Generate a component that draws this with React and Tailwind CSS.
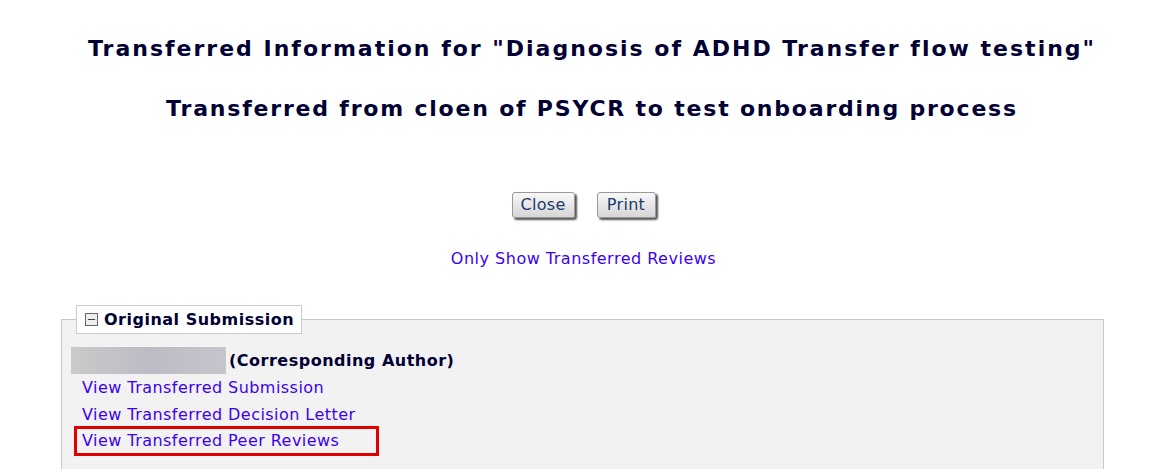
import { Minus } from 'lucide-react'

const LinkRow = ({ text }) => (
  <div className="pl-[11px] h-[27px] leading-[27px]">
    <a href="#" className="text-[#3c00f0] text-[16px] tracking-[0.45px]">{text}</a>
  </div>
)

const App = () => {
  return (
    <div className="w-[1153px] h-[469px] bg-white overflow-hidden text-[#000033]" style={{ fontFamily: '"DejaVu Sans", Verdana, sans-serif' }}>
      {/* Заголовки */}
      <div className="pl-[31px] pt-[31px] text-center">
        <h1 className="text-[22px] font-bold leading-[36px] tracking-[2px]">
          Transferred Information for "Diagnosis of ADHD Transfer flow testing"
        </h1>
        <h2 className="mt-[24px] text-[22px] font-bold leading-[36px] tracking-[1.8px]">
          Transferred from cloen of PSYCR to test onboarding process
        </h2>
      </div>

      {/* Кнопки */}
      <div className="mt-[65px] flex justify-center gap-[22px] pl-[14px]">
        <button className="w-[63px] h-[26px] rounded-[3px] border border-[#9a9a9a] bg-gradient-to-b from-[#f8f8f8] to-[#d6d6d6] text-[#1b3a6b] text-[16px] tracking-[0.3px] leading-[22px] shadow-[2px_2px_2px_#555]">
          Close
        </button>
        <button className="w-[59px] h-[26px] rounded-[3px] border border-[#9a9a9a] bg-gradient-to-b from-[#f8f8f8] to-[#d6d6d6] text-[#1b3a6b] text-[16px] tracking-[0.3px] leading-[22px] shadow-[2px_2px_2px_#555]">
          Print
        </button>
      </div>

      <div className="mt-[29px] text-center pl-[14px]">
        <a href="#" className="text-[#3c00f0] text-[16px] tracking-[0.5px]">Only Show Transferred Reviews</a>
      </div>

      {/* Оригинальная подача */}
      <div className="relative mt-[48px] ml-[61px] w-[1043px] h-[160px] border border-[#c8c8c8] bg-[#f2f2f2]">
        <div className="absolute left-[14px] top-[-15px] h-[29px] pl-[8px] pr-[7px] flex items-center gap-[6px] bg-white border border-[#cccccc]">
          <span className="w-[13px] h-[13px] border border-[#666] bg-[#eee] flex items-center justify-center">
            <Minus size={11} strokeWidth={2} color="#333" />
          </span>
          <span className="text-[16px] font-bold tracking-[0.5px]">Original Submission</span>
        </div>
        <div className="pt-[27px] pl-[9px]">
          <div className="flex items-center h-[27px]">
            <div className="w-[155px] h-[27px] bg-gradient-to-r from-[#cacaca] via-[#bdbcc6] to-[#c6c5cc]" />
            <span className="ml-[3px] text-[16px] font-bold tracking-[0.5px]">(Corresponding Author)</span>
          </div>
          <LinkRow text="View Transferred Submission" />
          <LinkRow text="View Transferred Decision Letter" />
          <div className="-mt-[2px] ml-[3px] w-[305px] h-[30px] border-[3px] border-[#e00000] pl-[5px] leading-[24px]">
            <a href="#" className="text-[#3c00f0] text-[16px] tracking-[0.45px]">View Transferred Peer Reviews</a>
          </div>
        </div>
      </div>
    </div>
  )
}

export default App
